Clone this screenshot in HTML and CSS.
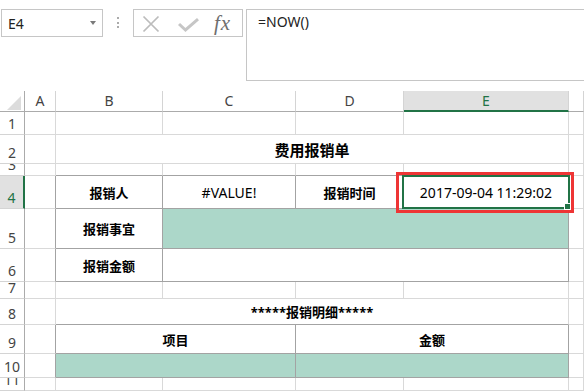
FILE: index.html
```html
<!DOCTYPE html>
<html lang="zh-CN">
<head>
    <meta charset="UTF-8">
    <title>费用报销单</title>
    <link rel="stylesheet" href="styles.css">
</head>
<body>
    <div class="toolbar">
        <div class="namebox"><span>E4</span><span class="caret"></span></div>
        <div class="grip"><i></i><i></i><i></i></div>
        <div class="fbtns">
            <svg class="ico-x" width="18" height="18" viewBox="0 0 18 18"><path d="M1.5 1.5 L16.5 16.5 M16.5 1.5 L1.5 16.5" stroke="#bcbcbc" stroke-width="1.7" fill="none"/></svg>
            <svg class="ico-ok" width="21" height="14" viewBox="0 0 21 14"><path d="M1 6 L7.5 12 L20 1.2" stroke="#c6c6c6" stroke-width="3" fill="none"/></svg>
            <span class="fx">fx</span>
        </div>
        <div class="fbar">=NOW()</div>
    </div>

    <div class="sheet">
        <!-- header -->
        <div class="corner"><span></span></div>
        <div class="ch">A</div>
        <div class="ch">B</div>
        <div class="ch">C</div>
        <div class="ch">D</div>
        <div class="ch sel">E</div>
        <div class="ch"></div>

        <!-- 1 -->
        <div class="rh">1</div>
        <div class="c"></div><div class="c"></div><div class="c"></div><div class="c"></div><div class="c"></div><div class="c"></div>

        <!-- 2 -->
        <div class="rh">2</div>
        <div class="c"></div>
        <div class="c s4 b title">费用报销单</div>
        <div class="c"></div>

        <!-- 3 -->
        <div class="rh">3</div>
        <div class="c"></div>
        <div class="c db"></div><div class="c db"></div><div class="c db"></div><div class="c db"></div>
        <div class="c"></div>

        <!-- 4 -->
        <div class="rh sel">4</div>
        <div class="c dr"></div>
        <div class="c dr db b zh">报销人</div>
        <div class="c dr db">#VALUE!</div>
        <div class="c dr db b zh">报销时间</div>
        <div class="c dr db cur">
            2017-09-04 11:29:02
            <div class="sel-box"><i class="handle"></i></div>
            <div class="mark"></div>
        </div>
        <div class="c"></div>

        <!-- 5 -->
        <div class="rh">5</div>
        <div class="c dr"></div>
        <div class="c dr db b zh">报销事宜</div>
        <div class="c dr db s3 g"></div>
        <div class="c"></div>

        <!-- 6 -->
        <div class="rh">6</div>
        <div class="c dr"></div>
        <div class="c dr db b zh">报销金额</div>
        <div class="c dr db s3"></div>
        <div class="c"></div>

        <!-- 7 -->
        <div class="rh">7</div>
        <div class="c"></div><div class="c"></div><div class="c"></div><div class="c"></div><div class="c"></div><div class="c"></div>

        <!-- 8 -->
        <div class="rh">8</div>
        <div class="c"></div>
        <div class="c s4 db b zh">*****报销明细*****</div>
        <div class="c"></div>

        <!-- 9 -->
        <div class="rh">9</div>
        <div class="c dr"></div>
        <div class="c dr db s2 b zh">项目</div>
        <div class="c dr db s2 b zh">金额</div>
        <div class="c"></div>

        <!-- 10 -->
        <div class="rh">10</div>
        <div class="c dr"></div>
        <div class="c dr db s2 g"></div>
        <div class="c dr db s2 g"></div>
        <div class="c"></div>

        <!-- 11 -->
        <div class="rh">11</div>
        <div class="c"></div><div class="c"></div><div class="c"></div><div class="c"></div><div class="c"></div><div class="c"></div>
    </div>
</body>
</html>
```

FILE: styles.css
```css
body, html {
    margin: 0;
    padding: 0;
    height: 100%;
    background: #fff;
    overflow: hidden;
    font-family: 'Noto Sans', 'Noto Sans CJK SC', sans-serif;
    color: #222;
}
.toolbar {
    display: flex;
    align-items: flex-start;
    height: 91px;
    padding-top: 9px;
    box-sizing: border-box;
}
.namebox {
    margin-left: 1px;
    width: 102px;
    height: 28px;
    border: 1px solid #c6c6c6;
    box-sizing: border-box;
    display: flex;
    align-items: center;
    justify-content: space-between;
    padding: 0 6px;
    font-size: 14px;
}
.caret {
    width: 0;
    height: 0;
    border-left: 3.5px solid transparent;
    border-right: 3.5px solid transparent;
    border-top: 4px solid #7a7a7a;
}
.grip {
    margin-left: 14px;
    width: 2px;
    height: 28px;
    display: flex;
    flex-direction: column;
    gap: 2.5px;
    padding-top: 8px;
    box-sizing: border-box;
}
.grip i {
    display: block;
    width: 2px;
    height: 2px;
    background: #ababab;
}
.fbtns {
    margin-left: 14px;
    width: 110px;
    height: 28px;
    border: 1px solid #c6c6c6;
    box-sizing: border-box;
    display: flex;
    align-items: center;
    padding-left: 8px;
}
.ico-x {
    margin-top: 1px;
}
.ico-ok {
    margin-left: 18px;
    margin-top: 4px;
}
.fx {
    margin-left: 15px;
    font-family: 'Liberation Serif', serif;
    font-style: italic;
    font-size: 21px;
    letter-spacing: 1px;
    color: #6e6e6e;
    line-height: 20px;
}
.fbar {
    margin-left: 3px;
    flex: 1;
    height: 72px;
    border: 1px solid #c6c6c6;
    border-right: none;
    box-sizing: border-box;
    padding: 2px 0 0 11px;
    font-size: 14px;
    line-height: 20px;
}

.sheet {
    display: grid;
    grid-template-columns: 25px 31px 107px 133px 108px 165px 1fr;
    grid-template-rows: 21px 23px 29px 12px 33px 40px 33px 17px 26px 29px 24px 1fr;
    height: 300px;
    font-size: 14px;
}
.corner {
    border-right: 1px solid #ababab;
    border-bottom: 1px solid #ababab;
    display: flex;
    align-items: flex-end;
    justify-content: flex-end;
    padding: 0 3px 1px 0;
}
.corner span {
    width: 14px;
    height: 14px;
    background: #dcdcdc;
    clip-path: polygon(100% 0, 100% 100%, 0 100%);
}
.ch {
    border-right: 1px solid #d4d4d4;
    border-bottom: 1px solid #ababab;
    color: #444;
    display: flex;
    align-items: center;
    justify-content: center;
    line-height: 18px;
}
.ch.sel {
    background: #e1e1e1;
    color: #217346;
    border-bottom: 2px solid #217346;
}
.rh {
    border-right: 1px solid #ababab;
    border-bottom: 1px solid #d4d4d4;
    color: #444;
    display: flex;
    align-items: flex-end;
    justify-content: center;
    overflow: hidden;
    line-height: 18px;
    padding-bottom: 1px;
}
.rh.sel {
    background: #e1e1e1;
    color: #217346;
    border-right: 2px solid #217346;
}
.c {
    border-right: 1px solid #d9d9d9;
    border-bottom: 1px solid #d9d9d9;
    display: flex;
    align-items: center;
    justify-content: center;
    white-space: nowrap;
    overflow: hidden;
    color: #000;
    min-width: 0;
}
.dr {
    border-right-color: #a3a3a3;
}
.db {
    border-bottom-color: #a3a3a3;
}
.g {
    background: #acd7c9;
}
.b {
    font-weight: bold;
}
.zh {
    font-size: 13px;
}
.title {
    font-size: 15px;
}
.s2 { grid-column: span 2; }
.s3 { grid-column: span 3; }
.s4 { grid-column: span 4; }

.cur {
    position: relative;
    overflow: visible;
}
.sel-box {
    position: absolute;
    top: -1px;
    left: -2px;
    right: -2px;
    bottom: -1px;
    border: 2px solid #217346;
}
.handle {
    position: absolute;
    right: -3px;
    bottom: -3px;
    width: 5px;
    height: 5px;
    background: #217346;
    border: 1px solid #fff;
}
.mark {
    position: absolute;
    top: -4px;
    left: -8px;
    right: -6px;
    bottom: -5px;
    border: 3px solid #ee3535;
    z-index: 2;
}
```
